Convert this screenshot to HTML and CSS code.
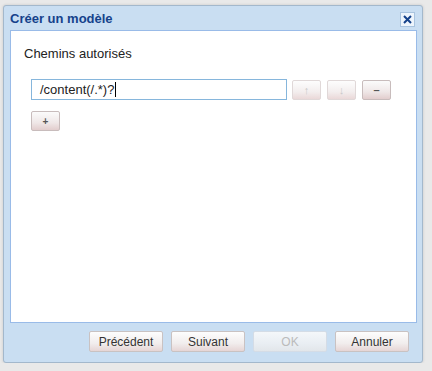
FILE: index.html
```html
<!DOCTYPE HTML>
<html>
  <head>
    <title>Créer un modèle</title>
    <meta charset="utf-8" />
    <link rel="stylesheet" href="styles.css">
  </head>
  <body>
    <div class="page">
      <div class="dialog">
        <div class="dialog-header">
          <span class="dialog-title">Créer un modèle</span>
          <a class="dialog-close" href="#">
            <svg width="11" height="11" viewBox="0 0 11 11"><path d="M2 2 L9 9 M9 2 L2 9" stroke="#15428b" stroke-width="2" fill="none"/></svg>
          </a>
        </div>
        <div class="dialog-body">
          <div class="field-label">Chemins autorisés</div>
          <div class="path-row">
            <div class="path-input">/content(/.*)?<span class="caret"></span></div>
            <button class="small-btn">&#8593;</button>
            <button class="small-btn">&#8595;</button>
            <button class="small-btn strong">&#8211;</button>
          </div>
          <button class="small-btn strong add-btn">+</button>
        </div>
        <div class="dialog-footer">
          <button class="btn">Précédent</button>
          <button class="btn">Suivant</button>
          <button class="btn disabled">OK</button>
          <button class="btn">Annuler</button>
        </div>
      </div>
    </div>
  </body>
</html>
```

FILE: styles.css
```css
*{
  margin:0;
  padding:0;
  box-sizing:border-box;
}
body{
  background:#e9e9e9;
  font-family:"Liberation Sans", Arial, sans-serif;
}
.page{
  padding:5px 9px 0 3px;
}
.dialog{
  width:420px;
  height:358px;
  border:1px solid #a3b8cc;
  border-radius:3px;
  background:#c9def2;
  padding:0 5px 0 6px;
  display:flex;
  flex-direction:column;
  box-shadow:0 0 3px rgba(0,0,0,0.15);
}
.dialog-header{
  height:24px;
  display:flex;
  align-items:center;
  justify-content:space-between;
}
.dialog-title{
  color:#15428b;
  font-weight:bold;
  font-size:13px;
  padding-top:1px;
}
.dialog-close{
  width:15px;
  height:15px;
  margin-top:2px;
  margin-right:2px;
  border:1px solid #a9c4df;
  background:#eef5fc;
  display:flex;
  align-items:center;
  justify-content:center;
}
.dialog-body{
  height:293px;
  background:#fff;
  border:1px solid #99bbe8;
  padding:15px 0 0 13px;
}
.field-label{
  font-size:13px;
  color:#222;
}
.path-row{
  display:flex;
  align-items:center;
  margin-top:18px;
  margin-left:7px;
}
.path-input{
  width:256px;
  height:21px;
  border:1px solid #86b6dc;
  font-size:13px;
  line-height:18px;
  color:#222;
  padding-left:8px;
  margin-right:5px;
  display:flex;
  align-items:center;
}
.caret{
  display:inline-block;
  width:1px;
  height:15px;
  margin-left:1px;
  background:#000;
}
.small-btn{
  width:29px;
  height:20px;
  margin-right:6px;
  border:1px solid #e0d8d8;
  border-radius:2px;
  background:linear-gradient(#fdfdfd,#f3eeee 60%,#ead8d8);
  color:#c8c8c8;
  font-size:11px;
  font-family:"Liberation Sans", Arial, sans-serif;
}
.small-btn.strong{
  border-color:#c8bcbc;
  color:#555;
  background:linear-gradient(#fbfbfb,#efe7e7 60%,#e2cdcd);
  font-weight:bold;
}
.add-btn{
  display:block;
  margin:11px 0 0 7px;
  font-size:10px;
}
.dialog-footer{
  flex:1;
  display:flex;
  justify-content:flex-end;
  align-items:center;
  gap:8px;
  padding-right:8px;
  padding-bottom:2px;
}
.btn{
  width:74px;
  height:21px;
  border:1px solid #c9c2c2;
  border-radius:2px;
  background:linear-gradient(#fdfdfd,#f1eded 60%,#e6d5d5);
  font-family:"Liberation Sans", Arial, sans-serif;
  font-size:12px;
  color:#333;
}
.btn.disabled{
  color:#bbb;
  border-color:#d4dce6;
  background:linear-gradient(#f4f7fa,#e9eef3 60%,#e2e6ea);
}
```
